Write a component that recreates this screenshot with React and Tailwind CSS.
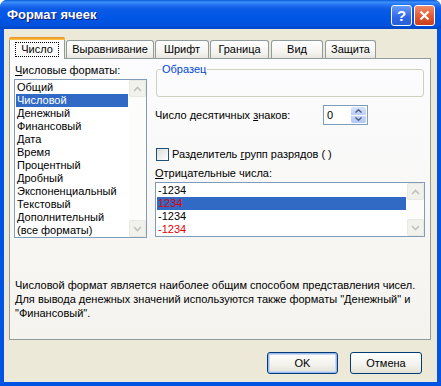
const formats = [
  'Общий',
  'Числовой',
  'Денежный',
  'Финансовый',
  'Дата',
  'Время',
  'Процентный',
  'Дробный',
  'Экспоненциальный',
  'Текстовый',
  'Дополнительный',
  '(все форматы)',
]

const negatives = [
  { text: '-1234', red: false },
  { text: '1234', red: true },
  { text: '-1234', red: false },
  { text: '-1234', red: true },
]

function Chevron({ up }) {
  return (
    <svg width="9" height="6" viewBox="0 0 9 6">
      <path d={up ? 'M1 5 L4.5 1.5 L8 5' : 'M1 1 L4.5 4.5 L8 1'} stroke="#C3C2B8" strokeWidth="1.6" fill="none" />
    </svg>
  )
}

function ScrollBar() {
  return (
    <div className="flex w-[17px] flex-col justify-between bg-[#FCFCFA]">
      <div className="flex h-[17px] items-center justify-center rounded-[2px] border border-[#E8E7E0] bg-[#F2F2EC]">
        <Chevron up />
      </div>
      <div className="flex h-[17px] items-center justify-center rounded-[2px] border border-[#E8E7E0] bg-[#F2F2EC]">
        <Chevron />
      </div>
    </div>
  )
}

function TitleBar() {
  return (
    <div className="flex h-[29px] shrink-0 items-center justify-between bg-[linear-gradient(to_bottom,#0A5BDB_0%,#3D91FA_8%,#2A78F2_14%,#0C5CE6_30%,#0056E6_60%,#0052DD_85%,#0046C8_100%)] pl-[7px] pr-[6px]">
      <span className="text-[13px] font-bold text-white [text-shadow:1px_1px_#0A1B7A]">Формат ячеек</span>
      <div className="flex gap-[2px] pt-[2px]">
        <div className="flex h-[21px] w-[21px] items-center justify-center rounded-[3px] border border-white bg-[linear-gradient(to_bottom,#6A9CF8,#2E66E8_60%,#2A5FD8)] text-[15px] font-bold leading-none text-white">
          ?
        </div>
        <div className="flex h-[21px] w-[21px] items-center justify-center rounded-[3px] border border-white bg-[linear-gradient(to_bottom,#F08C6A,#E2542C_60%,#C8401E)]">
          <svg width="11" height="11" viewBox="0 0 11 11">
            <path d="M1.5 1.5 L9.5 9.5 M9.5 1.5 L1.5 9.5" stroke="white" strokeWidth="2.2" />
          </svg>
        </div>
      </div>
    </div>
  )
}

function Tab({ label, w }) {
  return (
    <div
      className={`flex h-[18px] items-center justify-center rounded-t-[3px] border border-b-0 border-[#919B9C] bg-[linear-gradient(to_bottom,#FFFFFF,#F3F2EE_70%,#E8E6DE)] ${w}`}
    >
      {label}
    </div>
  )
}

function Button({ children, primary }) {
  return (
    <div
      className={`flex h-[22px] items-center justify-center rounded-[3px] border border-[#003C74] bg-[linear-gradient(to_bottom,#FFFFFF,#F2F1EB_60%,#E3E1D6)] ${primary ? 'w-[71px] shadow-[inset_0_0_0_1px_#9EB8EE,inset_0_0_0_2px_#C8D8F7]' : 'w-[72px]'}`}
    >
      {children}
    </div>
  )
}

export default function App() {
  return (
    <div className="flex h-[386px] w-[441px] flex-col overflow-hidden rounded-t-[7px] bg-[#0054E3] font-['Liberation_Sans',Arial,sans-serif] text-[11px] text-black">
      <TitleBar />
      <div className="mx-[4px] mb-[4px] flex flex-1 flex-col bg-[#ECE9D8]">
        {/* tabs */}
        <div className="relative z-10 -mb-[1px] flex items-end pl-[5px] pt-[8px]">
          <div className="flex h-[22px] w-[56px] flex-col rounded-t-[3px] border border-b-0 border-[#919B9C] bg-[#FCFCFE]">
            <div className="-mx-[1px] -mt-[1px] h-[3px] rounded-t-[3px] bg-[linear-gradient(to_bottom,#E68B2C,#FFC73C)]" />
            <div className="flex flex-1 items-center justify-center pb-[1px]">
              <span className="border border-dotted border-black px-[5px] leading-[13px]">Число</span>
            </div>
          </div>
          <div className="mb-[1px] ml-[1px]"><Tab label="Выравнивание" w="w-[88px]" /></div>
          <div className="mb-[1px] ml-[1px]"><Tab label="Шрифт" w="w-[54px]" /></div>
          <div className="mb-[1px] ml-[1px]"><Tab label="Граница" w="w-[59px]" /></div>
          <div className="mb-[1px] ml-[2px]"><Tab label="Вид" w="w-[52px]" /></div>
          <div className="mb-[1px] ml-[2px]"><Tab label="Защита" w="w-[51px]" /></div>
        </div>

        {/* panel */}
        <div className="ml-[5px] h-[282px] w-[422px] border border-[#919B9C] bg-[linear-gradient(to_bottom,#FCFCFE,#F4F3EE)]">
          <div className="flex pl-[4px] pt-[5px]">
            <div className="w-[133px]">
              <div className="pl-[1px] leading-[13px]">
                <u>Ч</u>исловые форматы:
              </div>
              <div className="mt-[2px] flex h-[159px] border border-[#7F9DB9] bg-white">
                <div className="flex-1 p-[1px]">
                  {formats.map((f, i) => (
                    <div key={f} className={`h-[13px] px-[1px] leading-[13px] ${i === 1 ? 'bg-[#316AC5] text-white' : ''}`}>
                      {f}
                    </div>
                  ))}
                </div>
                <ScrollBar />
              </div>
            </div>

            <div className="ml-[8px] w-[270px]">
              <fieldset className="-mt-[1px] ml-[1px] h-[34px] w-[268px] rounded-[3px] border border-[#D0D0BF]">
                <legend className="ml-[4px] px-[1px] leading-[13px] text-[#0046D5]">Образец</legend>
              </fieldset>

              <div className="mt-[8px] flex h-[20px] items-center">
                <div className="w-[168px]">
                  Число десятичных <u>з</u>наков:
                </div>
                <div className="flex h-[20px] w-[45px] items-stretch border border-[#7F9DB9] bg-white">
                  <div className="flex flex-1 items-center pl-[3px]">0</div>
                  <div className="my-[1px] mr-[1px] flex w-[15px] flex-col gap-[1px]">
                    <div className="flex flex-1 items-center justify-center rounded-t-[2px] bg-[linear-gradient(to_bottom,#D8E4FC,#B9CDF6)]">
                      <svg width="7" height="4" viewBox="0 0 7 4"><path d="M0.5 3.5 L3.5 0.8 L6.5 3.5" stroke="#4D6185" strokeWidth="1.5" fill="none" /></svg>
                    </div>
                    <div className="flex flex-1 items-center justify-center rounded-b-[2px] bg-[linear-gradient(to_bottom,#C6D6F8,#B2C7F4)]">
                      <svg width="7" height="4" viewBox="0 0 7 4"><path d="M0.5 0.5 L3.5 3.2 L6.5 0.5" stroke="#4D6185" strokeWidth="1.5" fill="none" /></svg>
                    </div>
                  </div>
                </div>
              </div>

              <div className="mt-[23px] flex h-[13px] items-center">
                <div className="ml-[1px] h-[13px] w-[13px] border border-[#1C5180] bg-[linear-gradient(135deg,#DCDCD7,#FFFFFF)]" />
                <div className="ml-[3px] leading-[13px]">
                  Разделитель <u>г</u>рупп разрядов ( )
                </div>
              </div>

              <div className="mt-[6px] leading-[13px]">
                <u>О</u>трицательные числа:
              </div>
              <div className="mt-[2px] flex h-[55px] border border-[#7F9DB9] bg-white">
                <div className="flex-1 p-[1px]">
                  {negatives.map((n, i) => (
                    <div
                      key={i}
                      className={`h-[13px] px-[1px] leading-[13px] ${i === 1 ? 'bg-[#316AC5]' : ''} ${n.red ? 'text-[#E00000]' : ''}`}
                    >
                      {n.text}
                    </div>
                  ))}
                </div>
                <ScrollBar />
              </div>
            </div>
          </div>

          <div className="mt-[40px] whitespace-nowrap pl-[5px] leading-[14px]">
            Числовой формат является наиболее общим способом представления чисел.
            <br />
            Для вывода денежных значений используются также форматы "Денежный" и
            <br />
            "Финансовый".
          </div>
        </div>

        {/* buttons */}
        <div className="mt-[12px] flex justify-end gap-[12px] pr-[15px]">
          <Button primary>OK</Button>
          <Button>Отмена</Button>
        </div>
      </div>
    </div>
  )
}
